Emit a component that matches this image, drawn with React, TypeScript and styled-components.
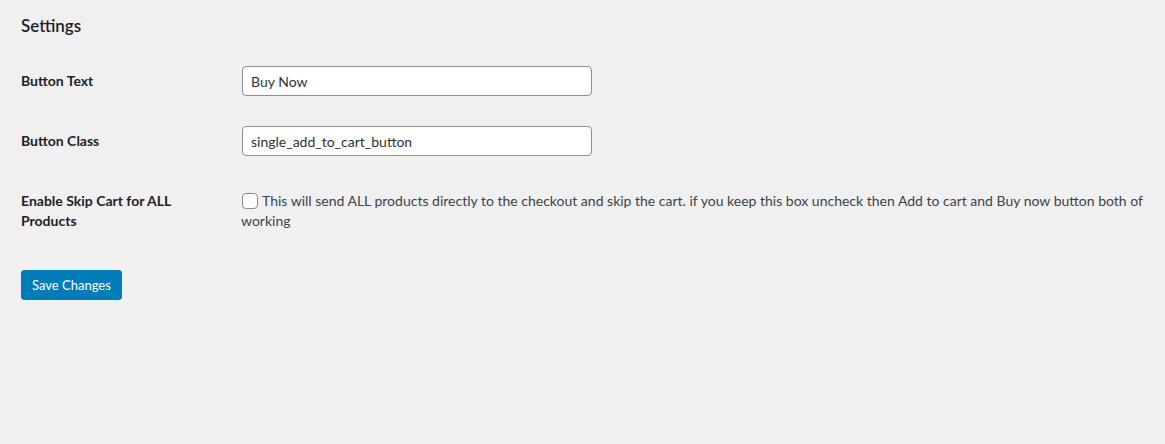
import React, { useState } from 'react';
import styled, { createGlobalStyle } from 'styled-components';

const GlobalStyle = createGlobalStyle`
  html, body {
    margin: 0;
    padding: 0;
    background: #f0f0f1;
  }
  body {
    color: #3c434a;
    font-family: Lato, "Open Sans", sans-serif;
    font-size: 13px;
    line-height: 1.4em;
  }
`;

const Wrap = styled.div`
  padding: 0 10px 0 21px;
  min-height: 444px;
  box-sizing: border-box;
`;

const Title = styled.h2`
  margin: 0;
  padding: 16px 0 0;
  height: 35px;
  color: #1d2327;
  font-size: 17px;
  font-weight: 600;
  line-height: 20px;
`;

const Table = styled.div`
  display: grid;
  grid-template-columns: 210px 1fr;
`;

const Label = styled.div`
  padding: 20px 10px 20px 0;
  color: #1d2327;
  font-size: 14px;
  font-weight: 700;
  line-height: 20px;
`;

const Cell = styled.div<{ $top?: number }>`
  padding: ${(p) => p.$top ?? 15}px 0 15px 10px;
  font-size: 14px;
  line-height: 20px;
`;

const TextInput = styled.input`
  box-sizing: border-box;
  width: 350px;
  height: 30px;
  margin: 0 1px;
  padding: 0 8px;
  border: 1px solid #8c8f94;
  border-radius: 4px;
  background: #fff;
  color: #2c3338;
  font-family: inherit;
  font-size: 14px;
  outline: none;
`;

const CheckRow = styled.label`
  display: block;
  color: #3c434a;
`;

const Check = styled.input`
  appearance: none;
  box-sizing: border-box;
  width: 16px;
  height: 16px;
  margin: 0 4px 0 1px;
  vertical-align: -3px;
  border: 1px solid #8c8f94;
  border-radius: 4px;
  background: #fff;
`;

const Submit = styled.div`
  padding-top: 19px;
`;

const PrimaryButton = styled.button`
  height: 30px;
  padding: 0 10px;
  border: 1px solid #007cba;
  border-radius: 3px;
  background: #007cba;
  color: #fff;
  font-family: inherit;
  font-size: 13px;
  line-height: 28px;
  cursor: pointer;
`;

export default function App() {
  const [text, setText] = useState('Buy Now');
  const [cls, setCls] = useState('single_add_to_cart_button');
  const [skip, setSkip] = useState(false);

  return (
    <>
      <GlobalStyle />
      <Wrap>
        <Title>Settings</Title>
        <Table>
          <Label>Button Text</Label>
          <Cell>
            <TextInput value={text} onChange={(e) => setText(e.target.value)} />
          </Cell>
          <Label>Button Class</Label>
          <Cell>
            <TextInput value={cls} onChange={(e) => setCls(e.target.value)} />
          </Cell>
          <Label>Enable Skip Cart for ALL Products</Label>
          <Cell $top={20}>
            <CheckRow>
              <Check type="checkbox" checked={skip} onChange={(e) => setSkip(e.target.checked)} />
              This will send ALL products directly to the checkout and skip the cart. if you keep this box uncheck then Add to cart and Buy now button both of working
            </CheckRow>
          </Cell>
        </Table>
        <Submit>
          <PrimaryButton>Save Changes</PrimaryButton>
        </Submit>
      </Wrap>
    </>
  );
}
